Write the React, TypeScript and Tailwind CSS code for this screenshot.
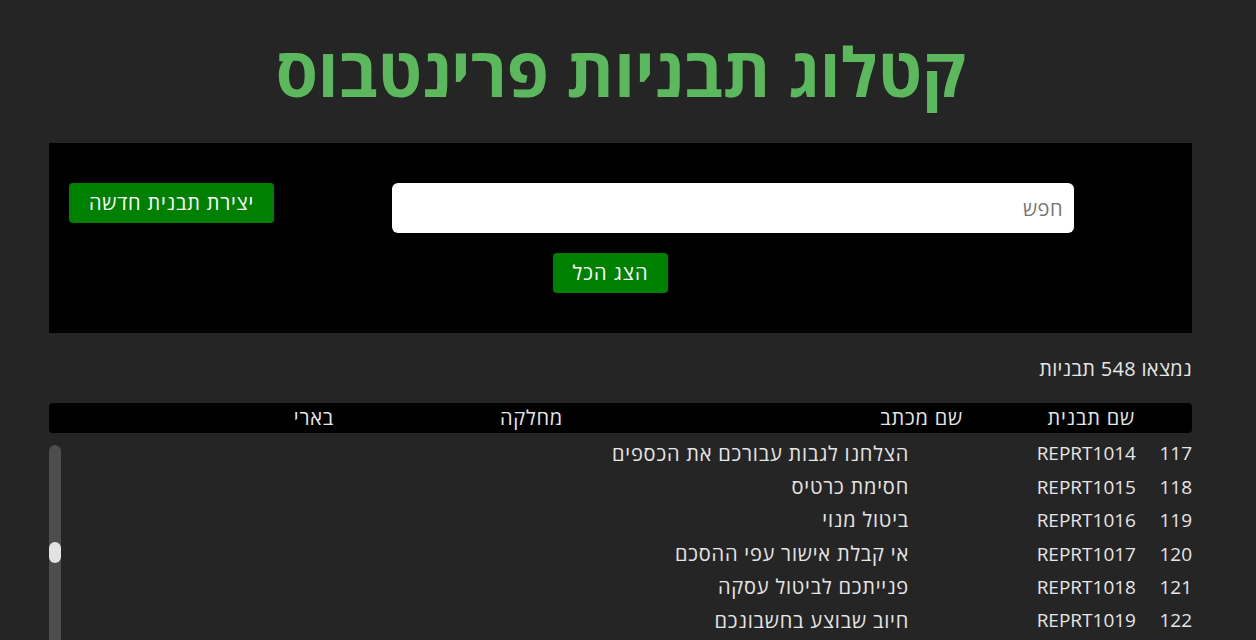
const rows = [
  { id: 117, code: 'REPRT1014', title: 'הצלחנו לגבות עבורכם את הכספים' },
  { id: 118, code: 'REPRT1015', title: 'חסימת כרטיס' },
  { id: 119, code: 'REPRT1016', title: 'ביטול מנוי' },
  { id: 120, code: 'REPRT1017', title: 'אי קבלת אישור עפי ההסכם' },
  { id: 121, code: 'REPRT1018', title: 'פנייתכם לביטול עסקה' },
  { id: 122, code: 'REPRT1019', title: 'חיוב שבוצע בחשבונכם' },
]

const App = () => {
  return (
    <div
      dir="rtl"
      className="h-[640px] overflow-hidden bg-[#252525] text-[#e6e6e6] font-['Open_Sans','Noto_Sans',sans-serif]"
    >
      <div className="pl-[49px] pr-[64px]">
        <h1 className="pt-[26px] h-[143px] text-center text-[68px] leading-[90px] font-bold text-[#5cb85c]">
          קטלוג תבניות פרינטבוס
        </h1>

        <div className="bg-black h-[190px] pt-[40px]">
          <div className="flex justify-between items-start pr-[118px] pl-[20px]">
            <input
              placeholder="חפש"
              className="w-[682px] h-[50px] rounded-[6px] bg-white px-[11px] text-[20px] tracking-[0.5px] text-black placeholder:text-[#757575] outline-none"
            />
            <button className="h-[40px] w-[205px] rounded-[4px] bg-[#008000] text-white text-[20px] tracking-[0.8px]">
              יצירת תבנית חדשה
            </button>
          </div>
          <div className="flex justify-center mt-[20px] pr-[20px]">
            <button className="h-[40px] w-[115px] rounded-[4px] bg-[#008000] text-white text-[20px] tracking-[1px]">
              הצג הכל
            </button>
          </div>
        </div>

        <div className="mt-[24px] text-[20px] leading-[24px] tracking-[0.3px]">נמצאו 548 תבניות</div>

        <div className="mt-[22px] flex h-[30px] items-center rounded-[4px] bg-black text-[20px] tracking-[0.8px]">
          <div className="w-[229px] pr-[57px]">שם תבנית</div>
          <div className="w-[400px]">שם מכתב</div>
          <div className="w-[229px]">מחלקה</div>
          <div>בארי</div>
        </div>

        <div className="flex mt-[4px]">
          <div className="flex-1">
            {rows.map((r) => (
              <div key={r.id} className="flex h-[33.4px] items-center">
                <div className="w-[56px] text-[19px]">{r.id}</div>
                <div className="w-[227px] text-[19px]">{r.code}</div>
                <div className="text-[20px] tracking-[0.8px]">{r.title}</div>
              </div>
            ))}
          </div>
          <div className="w-[12px] mt-[8px] h-[260px] rounded-t-[6px] bg-[#4d4d4d] flex flex-col">
            <div className="h-[97px]" />
            <div className="h-[21px] w-[12px] rounded-full bg-[#e2e2e2]" />
          </div>
        </div>
      </div>
    </div>
  )
}

export default App
